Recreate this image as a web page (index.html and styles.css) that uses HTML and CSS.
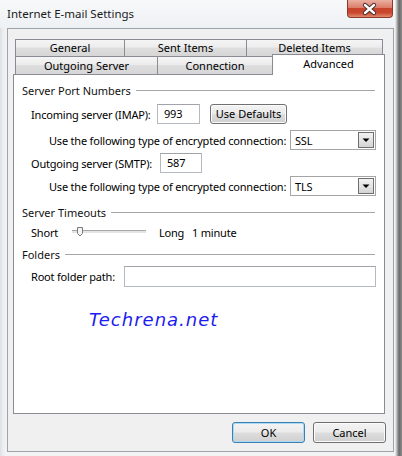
FILE: index.html
```html
<!DOCTYPE html>
<html>
<head>
<meta charset="utf-8">
<link rel="stylesheet" href="styles.css">
</head>
<body>
<div class="window">
  <div class="titlebar">
    <span class="title">Internet E-mail Settings</span>
    <div class="close">
      <svg width="46" height="18" viewBox="0 0 46 18">
        <path d="M18.5 5 L27.5 13 M27.5 5 L18.5 13" stroke="#4a3030" stroke-width="4.6" stroke-linecap="round"/>
        <path d="M18.5 5 L27.5 13 M27.5 5 L18.5 13" stroke="#ffffff" stroke-width="2.6" stroke-linecap="round"/>
      </svg>
    </div>
  </div>
  <div class="client">
    <div class="tabs">
      <div class="tabrow row1">
        <div class="tab t-general">General</div>
        <div class="tab t-sent">Sent Items</div>
        <div class="tab t-deleted">Deleted Items</div>
      </div>
      <div class="tabrow row2">
        <div class="tab t-outgoing">Outgoing Server</div>
        <div class="tab t-connection">Connection</div>
        <div class="tab t-advanced selected">Advanced</div>
      </div>
    </div>
    <div class="panel">
      <div class="group-head"><span>Server Port Numbers</span><span class="rule"></span></div>
      <div class="row h20 indent1 g6">
        <span class="lbl w-in">Incoming server (IMAP):</span>
        <span class="field port p-in">993</span>
        <span class="btn defaults">Use Defaults</span>
      </div>
      <div class="row h20 indent2 g6">
        <span class="lbl w-enc">Use the following type of encrypted connection:</span>
        <span class="combo"><span class="combo-text">SSL</span><span class="combo-btn"><svg width="14" height="14" viewBox="0 0 14 14"><path d="M3.5 5.5 H10.5 L7 9 Z" fill="#000"/></svg></span></span>
      </div>
      <div class="row h20 indent1 g3">
        <span class="lbl w-out">Outgoing server (SMTP):</span>
        <span class="field port p-out">587</span>
      </div>
      <div class="row h20 indent2 g3">
        <span class="lbl w-enc">Use the following type of encrypted connection:</span>
        <span class="combo"><span class="combo-text">TLS</span><span class="combo-btn"><svg width="14" height="14" viewBox="0 0 14 14"><path d="M3.5 5.5 H10.5 L7 9 Z" fill="#000"/></svg></span></span>
      </div>
      <div class="group-head g8"><span>Server Timeouts</span><span class="rule"></span></div>
      <div class="row h16 indent1 g4">
        <span class="lbl w-short">Short</span>
        <span class="slider">
          <svg width="74" height="16" viewBox="0 0 74 16">
            <rect x="0" y="6" width="74" height="1" fill="#a8a8a8"/>
            <rect x="0" y="7" width="74" height="2" fill="#e4e4e4"/>
            <path d="M5.5 3.5 H10.5 V9.5 L8 12 L5.5 9.5 Z" fill="#f4f4f4" stroke="#7a7a7a" stroke-width="1"/>
          </svg>
        </span>
        <span class="lbl w-long">Long</span>
        <span class="lbl">1 minute</span>
      </div>
      <div class="group-head g6"><span>Folders</span><span class="rule"></span></div>
      <div class="row h21 indent1 g4">
        <span class="lbl w-root">Root folder path:</span>
        <span class="field root"></span>
      </div>
      <div class="brand">Techrena.net</div>
    </div>
    <div class="buttons">
      <span class="btn dlg ok">OK</span>
      <span class="btn dlg cancel">Cancel</span>
    </div>
  </div>
</div>
</body>
</html>
```

FILE: styles.css
```css
html, body {
  margin: 0;
  padding: 0;
}
body {
  width: 402px;
  height: 456px;
  overflow: hidden;
  font-family: "Noto Sans", sans-serif;
  font-size: 11px;
  letter-spacing: -0.2px;
  color: #000;
}
.window {
  width: 402px;
  height: 456px;
  display: flex;
  flex-direction: column;
  background:
    linear-gradient(to right, #dcdfe3 0, #eceef1 3px, #f1f3f5 7px, #f1f3f5 395px, #b0b0b0 397px, #6a6a6a 399px, #8a8a8a 402px);
}
.titlebar {
  height: 28px;
  display: flex;
  align-items: flex-start;
  padding-left: 7px;
  background: linear-gradient(#f7f8fa, #eef1f4);
  margin-right: 8px;
}
.title {
  margin-top: 6px;
  line-height: 16px;
  font-size: 11.5px;
  letter-spacing: 0;
  color: #1a1a1a;
}
.close {
  margin-left: auto;
  margin-right: 1px;
  width: 46px;
  height: 18px;
  box-sizing: border-box;
  border: 1px solid #8a3a2c;
  border-top: none;
  border-radius: 0 0 4px 4px;
  background: linear-gradient(#eab0a2 0%, #dc7d68 45%, #c8432c 50%, #c9482f 75%, #e08a6c 100%);
  display: flex;
}
.close svg {
  margin-left: -1px;
}
.client {
  margin-left: 7px;
  width: 387px;
  height: 424px;
  box-sizing: border-box;
  border: 1px solid #9ea3aa;
  background: #f0f0f0;
  padding: 10px 0 0 5px;
}
.tabs {
  margin-left: 2px;
}
.tabrow {
  display: flex;
  align-items: flex-start;
}
.row1 {
  height: 17px;
}
.row2 {
  height: 18px;
}
.tab {
  box-sizing: border-box;
  border: 1px solid #898c95;
  border-bottom: none;
  background: linear-gradient(#f5f5f5 0%, #ececec 45%, #dedede 50%, #d6d6d6 100%);
  text-align: center;
  color: #000;
  letter-spacing: 0;
}
.row1 .tab {
  height: 17px;
  line-height: 16px;
}
.row2 .tab {
  height: 18px;
  line-height: 18px;
}
.tab + .tab {
  margin-left: -1px;
}
.t-general { width: 110px; }
.t-sent { width: 123px; }
.t-deleted { width: 137px; }
.t-outgoing { width: 143px; }
.t-connection { width: 116px; }
.t-advanced { width: 113px; }
.row2 .tab.selected {
  position: relative;
  z-index: 1;
  margin-top: -2px;
  height: 21px;
  line-height: 17px;
  background: #fff;
}
.panel {
  width: 372px;
  height: 340px;
  box-sizing: border-box;
  border: 1px solid #898c95;
  background: #fff;
  padding: 7px 9px 0 8px;
}
.group-head {
  height: 16px;
  display: flex;
  align-items: center;
  color: #111;
  letter-spacing: 0;
}
.rule {
  flex: 1;
  margin-left: 5px;
  margin-top: 1px;
  border-top: 1px solid #a6a6a6;
}
.row {
  display: flex;
  align-items: center;
}
.h16 { height: 16px; }
.h20 { height: 20px; }
.h21 { height: 21px; }
.g3 { margin-top: 3px; }
.g4 { margin-top: 4px; }
.g6 { margin-top: 6px; }
.g8 { margin-top: 8px; }
.indent1 { padding-left: 9px; }
.indent2 { padding-left: 27px; }
.lbl {
  white-space: nowrap;
  flex: none;
}
.w-in { width: 126px; }
.w-out { width: 129px; }
.w-enc { width: 241px; }
.w-short { width: 41px; }
.w-long { width: 33px; }
.w-root { width: 93px; }
.field {
  box-sizing: border-box;
  height: 20px;
  border: 1px solid #b5b9c0;
  border-top-color: #a0a4aa;
  background: #fff;
  padding-left: 6px;
  line-height: 18px;
  flex: none;
}
.p-in { width: 43px; }
.p-out { width: 42px; }
.field.root {
  width: 252px;
  height: 21px;
}
.btn {
  box-sizing: border-box;
  border: 1px solid #707070;
  border-radius: 3px;
  background: linear-gradient(#f3f3f3 0%, #ebebeb 48%, #dddddd 52%, #cfcfcf 100%);
  box-shadow: inset 0 0 0 1px #fbfbfb;
  text-align: center;
  flex: none;
  white-space: nowrap;
  letter-spacing: 0;
}
.defaults {
  margin-left: 10px;
  width: 77px;
  height: 20px;
  line-height: 18px;
}
.combo {
  box-sizing: border-box;
  width: 86px;
  height: 20px;
  border: 1px solid #a5a5a5;
  background: #fff;
  display: flex;
  align-items: center;
  padding: 1px;
  flex: none;
}
.combo-text {
  padding-left: 3px;
}
.combo-btn {
  margin-left: auto;
  width: 16px;
  height: 16px;
  box-sizing: border-box;
  border: 1px solid #6f6f6f;
  background: linear-gradient(#f2f2f2, #e4e4e4 50%, #d4d4d4);
  display: flex;
  align-items: center;
  justify-content: center;
}
.slider {
  width: 74px;
  height: 16px;
  margin-right: 13px;
  flex: none;
  display: flex;
}
.brand {
  margin-top: 21px;
  margin-left: 67px;
  height: 24px;
  line-height: 24px;
  font-family: "DejaVu Sans", sans-serif;
  font-style: italic;
  font-size: 18px;
  letter-spacing: 1px;
  color: #1c1cf0;
}
.buttons {
  margin-top: 8px;
  display: flex;
  justify-content: flex-end;
  gap: 8px;
  padding-right: 7px;
}
.dlg {
  width: 73px;
  height: 21px;
  line-height: 19px;
}
.ok {
  border-color: #3c7fb1;
  box-shadow: inset 0 0 0 1px #a9dbf6;
}
```
